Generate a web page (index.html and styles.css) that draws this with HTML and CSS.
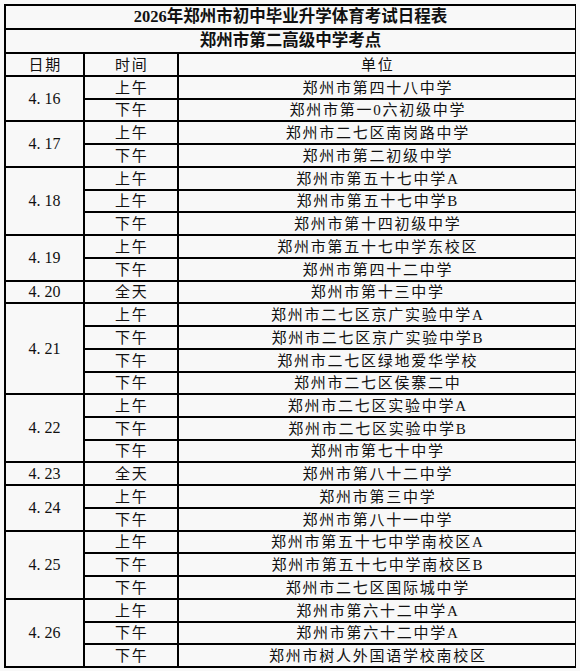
FILE: index.html
```html
<!DOCTYPE html>
<html lang="zh-CN">
<head>
<meta charset="utf-8">
<title>2026年郑州市初中毕业升学体育考试日程表</title>
<link rel="stylesheet" href="styles.css">
</head>
<body>
<table class="schedule">
  <colgroup>
    <col class="c-date">
    <col class="c-time">
    <col class="c-unit">
  </colgroup>
  <thead>
    <tr class="r-title"><th colspan="3">2026年郑州市初中毕业升学体育考试日程表</th></tr>
    <tr class="r-title"><th colspan="3">郑州市第二高级中学考点</th></tr>
    <tr class="r-head"><td>日期</td><td>时间</td><td>单位</td></tr>
  </thead>
  <tbody>
    <tr class="h23"><td class="date" rowspan="2">4. 16</td><td>上午</td><td>郑州市第四十八中学</td></tr>
    <tr class="h22"><td>下午</td><td>郑州市第一0六初级中学</td></tr>

    <tr class="h23"><td class="date" rowspan="2">4. 17</td><td>上午</td><td>郑州市二七区南岗路中学</td></tr>
    <tr class="h23"><td>下午</td><td>郑州市第二初级中学</td></tr>

    <tr class="h23"><td class="date" rowspan="3">4. 18</td><td>上午</td><td>郑州市第五十七中学A</td></tr>
    <tr class="h22"><td>上午</td><td>郑州市第五十七中学B</td></tr>
    <tr class="h23"><td>下午</td><td>郑州市第十四初级中学</td></tr>

    <tr class="h23"><td class="date" rowspan="2">4. 19</td><td>上午</td><td>郑州市第五十七中学东校区</td></tr>
    <tr class="h23"><td>下午</td><td>郑州市第四十二中学</td></tr>

    <tr class="h22"><td class="date">4. 20</td><td>全天</td><td>郑州市第十三中学</td></tr>

    <tr class="h23"><td class="date" rowspan="4">4. 21</td><td>上午</td><td>郑州市二七区京广实验中学A</td></tr>
    <tr class="h23"><td>下午</td><td>郑州市二七区京广实验中学B</td></tr>
    <tr class="h23"><td>下午</td><td>郑州市二七区绿地爱华学校</td></tr>
    <tr class="h22"><td>下午</td><td>郑州市二七区侯寨二中</td></tr>

    <tr class="h23"><td class="date" rowspan="3">4. 22</td><td>上午</td><td>郑州市二七区实验中学A</td></tr>
    <tr class="h23"><td>下午</td><td>郑州市二七区实验中学B</td></tr>
    <tr class="h22"><td>下午</td><td>郑州市第七十中学</td></tr>

    <tr class="h23"><td class="date">4. 23</td><td>全天</td><td>郑州市第八十二中学</td></tr>

    <tr class="h23"><td class="date" rowspan="2">4. 24</td><td>上午</td><td>郑州市第三中学</td></tr>
    <tr class="h23"><td>下午</td><td>郑州市第八十一中学</td></tr>

    <tr class="h22"><td class="date" rowspan="3">4. 25</td><td>上午</td><td>郑州市第五十七中学南校区A</td></tr>
    <tr class="h23"><td>下午</td><td>郑州市第五十七中学南校区B</td></tr>
    <tr class="h23"><td>下午</td><td>郑州市二七区国际城中学</td></tr>

    <tr class="h23"><td class="date" rowspan="3">4. 26</td><td>上午</td><td>郑州市第六十二中学A</td></tr>
    <tr class="h22"><td>下午</td><td>郑州市第六十二中学A</td></tr>
    <tr class="h23"><td>下午</td><td>郑州市树人外国语学校南校区</td></tr>
  </tbody>
</table>
</body>
</html>
```

FILE: styles.css
```css
html {
  background: #f8f8f8;
}
body {
  margin: 4px;
  font-family: "Liberation Serif", "Noto Sans CJK SC", serif;
  color: #111;
}
.schedule {
  width: 573px;
  border-collapse: collapse;
  table-layout: fixed;
  border: 2px solid #000;
  background: #f8f8f8;
}
.c-date { width: 79px; }
.c-time { width: 94px; }
.schedule th,
.schedule td {
  border: 2px solid #000;
  padding: 0;
  text-align: center;
  vertical-align: middle;
  white-space: nowrap;
  line-height: 14px;
}
.r-title {
  height: 24px;
}
.r-title th {
  font-size: 16.5px;
  font-weight: 700;
}
.r-head {
  height: 23px;
}
.h23 { height: 23px; }
.h22 { height: 22px; }
.schedule td {
  font-size: 15px;
  letter-spacing: 1.75px;
  padding-left: 1.75px;
}
.schedule td.date {
  font-size: 16px;
  letter-spacing: 0;
  padding-left: 0;
}
```
